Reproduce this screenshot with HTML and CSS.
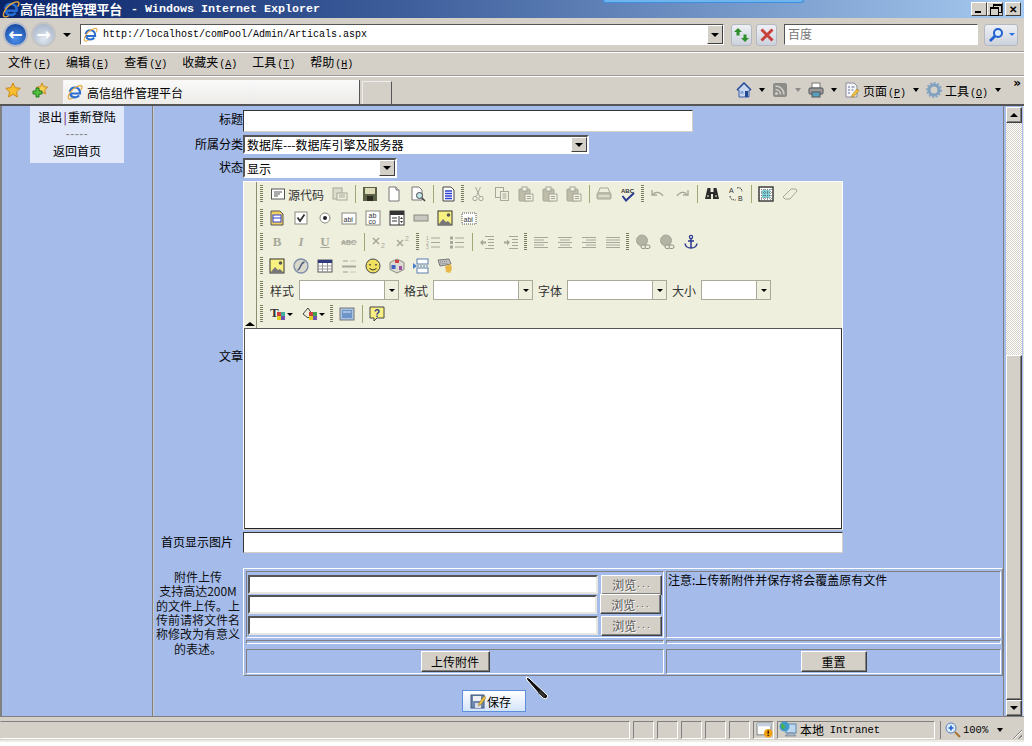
FILE: index.html
```html
<!DOCTYPE html>
<html lang="zh-CN">
<head>
  <meta charset="UTF-8">
  <title>高信组件管理平台 - Windows Internet Explorer</title>
  <link rel="stylesheet" href="styles.css">
</head>
<body>
<svg class="defs" width="0" height="0">
  <defs>
    <symbol id="i-ie" viewBox="0 0 16 16">
      <path d="M3 9.500h10c.4-3.500-1.800-6-5-6-2.600 0-4.700 1.700-5.200 4.300M3.200 9.500c.4 2.300 2.300 3.800 4.700 3.800 1.800 0 3.200-.7 4.200-2" fill="none" stroke="#2a6fd0" stroke-width="2.200"/>
      <path d="M1.500 14.500C.3 12 4 5 10 2.500c2.500-1 4.500-1.200 5 0 .4 1-.4 2.300-1.200 3.400M1.500 14.500c.9 1 3 .3 4.500-.5" fill="none" stroke="#e8a93a" stroke-width="1.200"/>
    </symbol>
    <symbol id="i-star" viewBox="0 0 16 16">
      <path d="M8 1l2.200 4.700 5.100.6-3.800 3.500 1 5.100L8 12.400l-4.500 2.500 1-5.100L.7 6.300l5.100-.6z" fill="#f8bd2e" stroke="#c98a1c"/>
    </symbol>
    <symbol id="i-addfav" viewBox="0 0 16 16">
      <path d="M10 1l1.700 3.700 4 .5-3 2.700.8 4-3.500-2-3.500 2 .8-4-3-2.700 4-.5z" fill="#f8cf55" stroke="#c98a1c"/>
      <path d="M4 6v3H1v3h3v3h3v-3h3V9H7V6z" fill="#55c13c" stroke="#1e7a1c"/>
    </symbol>
    <symbol id="i-refresh" viewBox="0 0 16 16">
      <path d="M4 1L0 5h2.500v3.500h3V5H8zM11 15l4-4h-2.500V7.500h-3V11H7z" fill="#2f8f2a"/>
    </symbol>
    <symbol id="i-stop" viewBox="0 0 16 16">
      <path d="M2.500 2.500l11 11m0-11l-11 11" stroke="#c8403c" stroke-width="3"/>
    </symbol>
    <symbol id="i-search" viewBox="0 0 16 16">
      <circle cx="10" cy="6" r="4" fill="#dfeeff" stroke="#1f5fd0" stroke-width="2"/>
      <path d="M7 9l-5 5" stroke="#1f5fd0" stroke-width="2.600"/>
    </symbol>
    <symbol id="i-home" viewBox="0 0 16 16">
      <path d="M8 1L1 8h2v7h10V8h2z" fill="#c9d6ec" stroke="#3a5da8"/>
      <path d="M1 8l7-7 7 7" fill="none" stroke="#2a4b9e" stroke-width="1.600"/>
      <rect x="9" y="9" width="3" height="6" fill="#1f4a90"/>
      <rect x="4.500" y="9" width="3" height="3" fill="#7fa8dc"/>
    </symbol>
    <symbol id="i-feed" viewBox="0 0 16 16">
      <rect x="1" y="1" width="14" height="14" rx="2" fill="#8c8c88"/>
      <circle cx="4.500" cy="11.500" r="1.500" fill="#d4d0c8"/>
      <path d="M3.500 7.500c2.800 0 5 2.200 5 5M3.500 4c4.800 0 8.500 3.700 8.500 8.500" fill="none" stroke="#d4d0c8" stroke-width="1.600"/>
    </symbol>
    <symbol id="i-print" viewBox="0 0 16 16">
      <rect x="4" y="1" width="8" height="5" fill="#fff" stroke="#777"/>
      <rect x="1" y="6" width="14" height="6" rx="1" fill="#9a9a9a" stroke="#555"/>
      <rect x="4" y="10" width="8" height="5" fill="#5aa0c0" stroke="#555"/>
    </symbol>
    <symbol id="i-page" viewBox="0 0 16 16">
      <path d="M2 1h8l3 3v11H2z" fill="#f6f6f8" stroke="#8a8a98"/>
      <path d="M4 5h2M4 8h2M4 11h2M7.500 5h3M7.500 8h2" stroke="#5f6f9e"/>
      <path d="M8 13l5-6 2 1.500-5 6-2.500.5z" fill="#f0c040" stroke="#a07820" stroke-width=".6"/>
    </symbol>
    <symbol id="i-gear" viewBox="0 0 16 16">
      <circle cx="8" cy="8" r="5" fill="none" stroke="#7fa0bf" stroke-width="3"/>
      <circle cx="8" cy="8" r="7" fill="none" stroke="#8aa6c0" stroke-width="2" stroke-dasharray="2 1.600"/>
    </symbol>
    <symbol id="i-warn" viewBox="0 0 16 16">
      <rect x="1" y="2" width="13" height="11" fill="#fff" stroke="#8a8a8a"/>
      <rect x="1" y="2" width="13" height="3" fill="#c4cfdf"/>
      <circle cx="11.500" cy="11.500" r="4" fill="#f0a010"/>
      <path d="M11.500 9v3m0 1v1" stroke="#402000" stroke-width="1.400"/>
    </symbol>
    <symbol id="i-zone" viewBox="0 0 18 18">
      <rect x="7" y="3" width="10" height="9" fill="#bcd8f0" stroke="#5a86ae"/>
      <path d="M6 15l4-3h4l3 3z" fill="#a8b4c4" stroke="#68788a" stroke-width=".6"/>
      <circle cx="5.500" cy="5.500" r="5" fill="#3f9ac8"/>
      <path d="M2 3c2-1 3 1 4 2s-1 3-2 3-2-2-2-5z" fill="#49b04a"/>
    </symbol>
    <symbol id="i-zoom" viewBox="0 0 16 16">
      <circle cx="6" cy="6" r="5" fill="#dfeeff" stroke="#5580b8"/>
      <path d="M3.500 6h5M6 3.500v5" stroke="#1f5fd0" stroke-width="1.600"/>
      <path d="M10 10l5 5" stroke="#a87838" stroke-width="2.200"/>
    </symbol>
    <symbol id="i-source" viewBox="0 0 16 16">
      <rect x="1.500" y="3" width="13" height="10" fill="#fff" stroke="#555"/>
      <path d="M4 6h8M4 8h6M4 10h4" stroke="#555"/>
    </symbol>
    <symbol id="i-doc2" viewBox="0 0 16 16">
      <rect x="1" y="2" width="9" height="11" fill="#dddccc" stroke="#a8a89a"/>
      <rect x="5" y="7" width="10" height="7" fill="#efefde" stroke="#a8a89a"/>
      <path d="M7 9h6M7 11h6" stroke="#a8a89a"/>
    </symbol>
    <symbol id="i-save" viewBox="0 0 16 16">
      <rect x="1" y="1" width="14" height="14" fill="#5c6246"/>
      <rect x="3" y="2" width="10" height="6" fill="#dedcb8"/>
      <rect x="5" y="10" width="6" height="5" fill="#2c2c20"/>
    </symbol>
    <symbol id="i-new" viewBox="0 0 16 16">
      <path d="M3 1h7l3 3v11H3z" fill="#fff" stroke="#777"/>
      <path d="M10 1v3h3" fill="#ddd" stroke="#777"/>
    </symbol>
    <symbol id="i-preview" viewBox="0 0 16 16">
      <path d="M2 1h7l3 3v10H2z" fill="#fff" stroke="#777"/>
      <circle cx="9.500" cy="9.500" r="3" fill="#bfe6ea" stroke="#444"/>
      <path d="M12 12l3 3" stroke="#444" stroke-width="1.600"/>
    </symbol>
    <symbol id="i-template" viewBox="0 0 16 16">
      <path d="M3 1h8l3 3v11H3z" fill="#fff" stroke="#444"/>
      <path d="M5 5h7M5 7.500h7M5 10h7M5 12.500h7" stroke="#2d3fd0" stroke-width="1.400"/>
    </symbol>
    <symbol id="i-cut" viewBox="0 0 16 16">
      <path d="M5.500 1l4 9M10.500 1l-4 9" stroke="#a8a89a" fill="none"/>
      <circle cx="5" cy="12.500" r="2.200" fill="none" stroke="#a8a89a"/>
      <circle cx="11" cy="12.500" r="2.200" fill="none" stroke="#a8a89a"/>
    </symbol>
    <symbol id="i-copy" viewBox="0 0 16 16">
      <rect x="1.500" y="1.500" width="8" height="10" fill="none" stroke="#a8a89a"/>
      <rect x="6.500" y="5.500" width="8" height="9" fill="#efefde" stroke="#a8a89a"/>
      <path d="M8.500 8h4M8.500 10h4M8.500 12h4" stroke="#a8a89a"/>
    </symbol>
    <symbol id="i-paste" viewBox="0 0 16 16">
      <rect x="1" y="3" width="11" height="12" rx="1" fill="#bdbdaa" stroke="#a8a89a"/>
      <rect x="4" y="1" width="5" height="4" fill="#efefde" stroke="#a8a89a"/>
      <rect x="7" y="8" width="8" height="7" fill="#efefde" stroke="#a8a89a"/>
      <path d="M9 10.500h4M9 12.500h4" stroke="#a8a89a"/>
    </symbol>
    <symbol id="i-printg" viewBox="0 0 16 16">
      <path d="M4 2h8l2 5H2z" fill="#efefde" stroke="#a8a89a"/>
      <rect x="1" y="7" width="14" height="6" rx="1" fill="#c4c4b0" stroke="#a8a89a"/>
      <path d="M3 10h10" stroke="#efefde"/>
    </symbol>
    <symbol id="i-spell" viewBox="0 0 16 16">
      <text x="1" y="6.500" class="ti ti-abc">ABC</text>
      <path d="M2.500 10l3.500 4.500L14 7" fill="none" stroke="#2a3a90" stroke-width="2"/>
    </symbol>
    <symbol id="i-undo" viewBox="0 0 16 16">
      <path d="M2 4v5h5M3 8.500c2-3 7-3 10 1.500" fill="none" stroke="#a8a89a" stroke-width="1.300"/>
    </symbol>
    <symbol id="i-redo" viewBox="0 0 16 16">
      <path d="M14 4v5H9M13 8.500c-2-3-7-3-10 1.500" fill="none" stroke="#a8a89a" stroke-width="1.300"/>
    </symbol>
    <symbol id="i-find" viewBox="0 0 16 16">
      <path d="M3.500 2h3v4h3V2h3l2.500 11h-6V8H7v5H1z" fill="#2c2c2c"/>
      <path d="M3 10h2M11 10h2" stroke="#efefde"/>
    </symbol>
    <symbol id="i-replace" viewBox="0 0 16 16">
      <text x="1" y="7" class="ti ti-sm">A</text>
      <text x="10" y="15" class="ti ti-sm">B</text>
      <path d="M9 2c4-1 5 1 5 4M2 10c0 3 2 4 6 4" fill="none" stroke="#333" stroke-dasharray="1.500 1"/>
    </symbol>
    <symbol id="i-selall" viewBox="0 0 16 16">
      <rect x="1" y="1" width="14" height="14" fill="#fff" stroke="#333" stroke-width="1.400"/>
      <rect x="4" y="4" width="8" height="8" fill="#7fd0d8"/>
      <path d="M1 3.500h14M1 6.500h14M1 9.500h14M1 12.500h14M3.500 1v14M6.500 1v14M9.500 1v14M12.500 1v14" stroke="#555" stroke-width=".6" stroke-dasharray="1 1"/>
    </symbol>
    <symbol id="i-eraser" viewBox="0 0 16 16">
      <path d="M1 11L9 3h5l1 2-7 8H3z" fill="#efefde" stroke="#a8a89a"/>
    </symbol>
    <symbol id="i-form" viewBox="0 0 16 16">
      <path d="M2 1h9l3 3v11H2z" fill="#f0d060" stroke="#555"/>
      <rect x="4" y="5" width="8" height="7" fill="#fff" stroke="#2d3fd0"/>
      <path d="M4 8h8" stroke="#2d3fd0"/>
    </symbol>
    <symbol id="i-check" viewBox="0 0 16 16">
      <rect x="2" y="2" width="12" height="12" fill="#fff" stroke="#8a8a80"/>
      <path d="M4.500 7.500L7 11l4.500-6.500" fill="none" stroke="#333" stroke-width="1.800"/>
    </symbol>
    <symbol id="i-radio" viewBox="0 0 16 16">
      <circle cx="8" cy="8" r="5" fill="#fff" stroke="#8a8a80"/>
      <circle cx="8" cy="8" r="2" fill="#222"/>
    </symbol>
    <symbol id="i-textf" viewBox="0 0 16 16">
      <rect x="1" y="3" width="14" height="11" fill="#fff" stroke="#8a8a80"/>
      <text x="2.500" y="12" class="ti ti-ab">abl</text>
    </symbol>
    <symbol id="i-texta" viewBox="0 0 16 16">
      <rect x="1" y="1" width="14" height="14" fill="#fff" stroke="#8a8a80"/>
      <text x="3.500" y="7.500" class="ti ti-ab">ab</text>
      <text x="3.500" y="14" class="ti ti-ab">co</text>
    </symbol>
    <symbol id="i-select" viewBox="0 0 16 16">
      <rect x="1" y="1" width="14" height="14" fill="#fff" stroke="#333"/>
      <rect x="1" y="1" width="14" height="4" fill="#333"/>
      <path d="M3 8h5M3 11h5M10 6v9" stroke="#333"/>
      <path d="M11 9h3l-1.500-2zM11 11h3l-1.500 2z" fill="#333"/>
    </symbol>
    <symbol id="i-button" viewBox="0 0 16 16">
      <rect x="1" y="5" width="14" height="6" fill="#c8c8c0" stroke="#8a8a80"/>
    </symbol>
    <symbol id="i-image" viewBox="0 0 16 16">
      <rect x="1" y="1" width="14" height="14" fill="#f8f080" stroke="#333"/>
      <circle cx="11.500" cy="5" r="1.800" fill="#555"/>
      <path d="M1 15l5-6 3 3 2-1 4 4z" fill="#777"/>
    </symbol>
    <symbol id="i-hidden" viewBox="0 0 16 16">
      <rect x="1" y="3" width="14" height="11" fill="#fff" stroke="#555" stroke-dasharray="1 1"/>
      <text x="2.500" y="12" class="ti ti-ab">abl</text>
    </symbol>
    <symbol id="i-abc" viewBox="0 0 16 16">
      <text x="0" y="11" class="ti ti-abcg">ABC</text>
      <path d="M0 8h16" stroke="#a8a89a"/>
    </symbol>
    <symbol id="i-sub" viewBox="0 0 16 16">
      <path d="M2 4l6 6m0-6l-6 6" stroke="#a8a89a" stroke-width="1.500"/>
      <text x="10" y="14" class="ti ti-grey">2</text>
    </symbol>
    <symbol id="i-sup" viewBox="0 0 16 16">
      <path d="M2 6l6 6m0-6l-6 6" stroke="#a8a89a" stroke-width="1.500"/>
      <text x="10" y="7" class="ti ti-grey">2</text>
    </symbol>
    <symbol id="i-ol" viewBox="0 0 16 16">
      <text x="1" y="6" class="ti ti-grey ti-xs">1</text>
      <text x="1" y="10.500" class="ti ti-grey ti-xs">2</text>
      <text x="1" y="15" class="ti ti-grey ti-xs">3</text>
      <path d="M6 4h9M6 8.500h9M6 13h9" stroke="#a8a89a"/>
    </symbol>
    <symbol id="i-ul" viewBox="0 0 16 16">
      <path d="M1 2.500h3v3H1zM1 7h3v3H1zM1 11.500h3v3H1z" fill="#a8a89a"/>
      <path d="M6 4h9M6 8.500h9M6 13h9" stroke="#a8a89a"/>
    </symbol>
    <symbol id="i-outdent" viewBox="0 0 16 16">
      <path d="M6 2.500h9M9 5.500h6M9 8.500h6M9 11.500h6M6 14.500h9" stroke="#a8a89a"/>
      <path d="M1 8.500l3-3v2h3v2H4v2z" fill="#a8a89a"/>
    </symbol>
    <symbol id="i-indent" viewBox="0 0 16 16">
      <path d="M6 2.500h9M9 5.500h6M9 8.500h6M9 11.500h6M6 14.500h9" stroke="#a8a89a"/>
      <path d="M7 8.500l-3-3v2H1v2h3v2z" fill="#a8a89a"/>
    </symbol>
    <symbol id="i-left" viewBox="0 0 16 16">
      <path d="M1 3.500h14M1 6h10M1 8.500h14M1 11h10M1 13.500h14" stroke="#a8a89a"/>
    </symbol>
    <symbol id="i-center" viewBox="0 0 16 16">
      <path d="M1 3.500h14M3 6h10M1 8.500h14M3 11h10M1 13.500h14" stroke="#a8a89a"/>
    </symbol>
    <symbol id="i-right" viewBox="0 0 16 16">
      <path d="M1 3.500h14M5 6h10M1 8.500h14M5 11h10M1 13.500h14" stroke="#a8a89a"/>
    </symbol>
    <symbol id="i-full" viewBox="0 0 16 16">
      <path d="M1 3.500h14M1 6h14M1 8.500h14M1 11h14M1 13.500h14" stroke="#a8a89a"/>
    </symbol>
    <symbol id="i-link" viewBox="0 0 16 16">
      <circle cx="7" cy="6.500" r="5.500" fill="#b4b4a4" stroke="#a8a89a"/>
      <rect x="6" y="11" width="5" height="3.500" rx="1.700" fill="#efefde" stroke="#8c8c80"/>
      <rect x="10" y="11" width="5" height="3.500" rx="1.700" fill="#efefde" stroke="#8c8c80"/>
    </symbol>
    <symbol id="i-anchor" viewBox="0 0 16 16">
      <circle cx="8" cy="3" r="1.600" fill="none" stroke="#2a3a90" stroke-width="1.200"/>
      <path d="M8 4.500V14M5 7h6M2 9.500c.5 3 3 4.500 6 4.500s5.500-1.500 6-4.500" fill="none" stroke="#2a3a90" stroke-width="1.500"/>
    </symbol>
    <symbol id="i-flash" viewBox="0 0 16 16">
      <circle cx="8" cy="8" r="7" fill="#d8d8cc" stroke="#7f8fa8" stroke-width="1.400"/>
      <path d="M4.500 12c3 0 2.500-7 7-8" fill="none" stroke="#4a5a78" stroke-width="1.400"/>
    </symbol>
    <symbol id="i-table" viewBox="0 0 16 16">
      <rect x="1" y="2" width="14" height="12" fill="#fff" stroke="#555"/>
      <rect x="1" y="2" width="14" height="3" fill="#2d3a80"/>
      <path d="M1 8h14M1 11h14M5.500 5v9M10.500 5v9" stroke="#999"/>
    </symbol>
    <symbol id="i-hr" viewBox="0 0 16 16">
      <path d="M2 3h5M2 14h5" stroke="#c8c8b8" stroke-width="2"/>
      <path d="M1 8.500h14" stroke="#a8a89a" stroke-width="2"/>
      <path d="M9 3h6M9 14h6" stroke="#c8c8b8"/>
    </symbol>
    <symbol id="i-smile" viewBox="0 0 16 16">
      <circle cx="8" cy="8" r="7" fill="#f0e060" stroke="#444"/>
      <path d="M5 6v1.500M11 6v1.500" stroke="#333" stroke-width="1.400"/>
      <path d="M4.500 10c1.500 2.500 5.500 2.500 7 0" fill="none" stroke="#333"/>
    </symbol>
    <symbol id="i-char" viewBox="0 0 16 16">
      <path d="M8 1l7 3.500v7L8 15l-7-3.500v-7z" fill="#dcdcd4" stroke="#8a8a80"/>
      <rect x="6" y="2" width="4" height="3" fill="#d04040"/>
      <rect x="2.500" y="7" width="4" height="4" fill="#4060c0"/>
      <rect x="10" y="8" width="3" height="4" fill="#a050a0"/>
    </symbol>
    <symbol id="i-pagebreak" viewBox="0 0 16 16">
      <rect x="4" y="1" width="11" height="5" fill="#fff" stroke="#5a7fae"/>
      <rect x="4" y="10" width="11" height="5" fill="#fff" stroke="#5a7fae"/>
      <path d="M0 5l4 3-4 3z" fill="#4a80c8"/>
      <path d="M4 8h11" stroke="#5a7fae" stroke-dasharray="2 1"/>
    </symbol>
    <symbol id="i-keyboard" viewBox="0 0 16 16">
      <path d="M1 2l11-1 2 5-11 2z" fill="#c4c4c8" stroke="#777"/>
      <path d="M8 8l6-2 1 5-2 4-4-1z" fill="#e8b848"/>
      <path d="M3 4l8-1M3.500 6l8-1" stroke="#777" stroke-dasharray="1 1"/>
    </symbol>
    <symbol id="i-tcolor" viewBox="0 0 16 16">
      <text x="0" y="11" class="ti ti-t">T</text>
      <rect x="7" y="6" width="4" height="4" fill="#d04040"/>
      <rect x="11" y="6" width="4" height="4" fill="#40b0a0"/>
      <rect x="7" y="10" width="4" height="4" fill="#e0d020"/>
      <rect x="11" y="10" width="4" height="4" fill="#7050b0"/>
    </symbol>
    <symbol id="i-bcolor" viewBox="0 0 16 16">
      <path d="M1 8l5-6 4 6-4 4z" fill="#efefde" stroke="#444"/>
      <rect x="7" y="6" width="4" height="4" fill="#d04040"/>
      <rect x="11" y="6" width="4" height="4" fill="#40a050"/>
      <rect x="7" y="10" width="4" height="4" fill="#e0d020"/>
      <rect x="11" y="10" width="4" height="4" fill="#7050b0"/>
    </symbol>
    <symbol id="i-blocks" viewBox="0 0 16 16">
      <rect x="1" y="2" width="14" height="12" fill="#a8c4e4" stroke="#777"/>
      <rect x="3" y="4" width="10" height="8" fill="#6f94c8"/>
      <path d="M4 6h8" stroke="#dce8f6"/>
    </symbol>
    <symbol id="i-about" viewBox="0 0 16 16">
      <path d="M1 1h14v11H8l-3 3v-3H1z" fill="#f8f080" stroke="#444"/>
      <text x="5" y="10.500" class="ti ti-q">?</text>
    </symbol>
    <symbol id="i-savebtn" viewBox="0 0 16 16">
      <rect x="1" y="2" width="13" height="13" fill="#6f88b0" stroke="#3e5478"/>
      <rect x="3" y="3" width="8" height="5" fill="#f0f0f4"/>
      <rect x="5" y="10" width="6" height="5" fill="#d8dce4"/>
      <path d="M9 10l5-7 2 1.500-5 7-2.500 1z" fill="#f0c848" stroke="#806010" stroke-width=".5"/>
    </symbol>
  </defs>
</svg>

<div class="window">
  <div class="titlebar">
    <div class="title-tab"></div>
    <svg class="ico-title"><use href="#i-ie"/></svg>
    <span class="title-cn">高信组件管理平台</span>
    <span class="title-en">- Windows Internet Explorer</span>
    <div class="win-btns">
      <span class="win-btn win-min"></span>
      <span class="win-btn win-max"></span>
      <span class="win-btn win-close">✕</span>
    </div>
  </div>

  <div class="addressbar">
    <span class="nav-btn nav-back">←</span>
    <span class="nav-btn nav-fwd">→</span>
    <span class="arrow nav-arrow"></span>
    <div class="url-box">
      <svg class="ico"><use href="#i-ie"/></svg>
      <span class="url-text">http://localhost/comPool/Admin/Articals.aspx</span>
      <span class="drop-btn"><span class="arrow"></span></span>
    </div>
    <span class="tool-btn"><svg class="ico"><use href="#i-refresh"/></svg></span>
    <span class="tool-btn"><svg class="ico"><use href="#i-stop"/></svg></span>
    <div class="search-box">百度</div>
    <span class="tool-btn search-btn">
      <svg class="ico"><use href="#i-search"/></svg>
      <span class="arrow arrow-blue"></span>
    </span>
  </div>

  <div class="menubar">
    <span>文件<small>(<u>F</u>)</small></span>
    <span>编辑<small>(<u>E</u>)</small></span>
    <span>查看<small>(<u>V</u>)</small></span>
    <span>收藏夹<small>(<u>A</u>)</small></span>
    <span>工具<small>(<u>T</u>)</small></span>
    <span>帮助<small>(<u>H</u>)</small></span>
  </div>

  <div class="tabbar">
    <svg class="ico fav-star"><use href="#i-star"/></svg>
    <svg class="ico fav-add"><use href="#i-addfav"/></svg>
    <div class="tab">
      <svg class="ico"><use href="#i-ie"/></svg>
      <span>高信组件管理平台</span>
    </div>
    <div class="tab-new"></div>
    <div class="cmdbar">
      <svg class="ico"><use href="#i-home"/></svg><span class="arrow"></span>
      <svg class="ico"><use href="#i-feed"/></svg><span class="arrow arrow-grey"></span>
      <svg class="ico"><use href="#i-print"/></svg><span class="arrow"></span>
      <svg class="ico"><use href="#i-page"/></svg><span class="cmd-text">页面<small>(<u>P</u>)</small></span><span class="arrow"></span>
      <svg class="ico"><use href="#i-gear"/></svg><span class="cmd-text">工具<small>(<u>O</u>)</small></span><span class="arrow"></span>
      <span class="cmd-more">»</span>
    </div>
  </div>

  <div class="content">
    <div class="sidebar">
      <div class="side-box">
        <div>退出<span class="side-sep">|</span>重新登陆</div>
        <div class="side-dash">-----</div>
        <div>返回首页</div>
      </div>
    </div>

    <form class="main">
      <div class="row row-title">
        <label>标题</label>
        <input class="field field-title" type="text">
      </div>
      <div class="row row-cat">
        <label>所属分类</label>
        <div class="select select-cat">数据库---数据库引擎及服务器<span class="drop-btn"><span class="arrow"></span></span></div>
      </div>
      <div class="row row-state">
        <label>状态</label>
        <div class="select select-state">显示<span class="drop-btn"><span class="arrow"></span></span></div>
      </div>

      <div class="row row-editor">
        <label>文章</label>
        <div class="editor">
          <div class="editor-tools">
            <div class="collapse"><span class="arrow arrow-up"></span></div>
            <div class="toolrows">
              <div class="toolrow">
                <i class="grip"></i>
                <span class="btn btn-text"><svg class="ico"><use href="#i-source"/></svg>源代码</span>
                <span class="btn"><svg class="ico"><use href="#i-doc2"/></svg></span>
                <i class="sep"></i>
                <span class="btn"><svg class="ico"><use href="#i-save"/></svg></span>
                <span class="btn"><svg class="ico"><use href="#i-new"/></svg></span>
                <span class="btn"><svg class="ico"><use href="#i-preview"/></svg></span>
                <i class="sep"></i>
                <span class="btn"><svg class="ico"><use href="#i-template"/></svg></span>
                <i class="grip"></i>
                <span class="btn"><svg class="ico"><use href="#i-cut"/></svg></span>
                <span class="btn"><svg class="ico"><use href="#i-copy"/></svg></span>
                <span class="btn"><svg class="ico"><use href="#i-paste"/></svg></span>
                <span class="btn"><svg class="ico"><use href="#i-paste"/></svg></span>
                <span class="btn"><svg class="ico"><use href="#i-paste"/></svg></span>
                <i class="sep"></i>
                <span class="btn"><svg class="ico"><use href="#i-printg"/></svg></span>
                <span class="btn"><svg class="ico"><use href="#i-spell"/></svg></span>
                <i class="grip"></i>
                <span class="btn"><svg class="ico"><use href="#i-undo"/></svg></span>
                <span class="btn"><svg class="ico"><use href="#i-redo"/></svg></span>
                <i class="sep"></i>
                <span class="btn"><svg class="ico"><use href="#i-find"/></svg></span>
                <span class="btn"><svg class="ico"><use href="#i-replace"/></svg></span>
                <i class="sep"></i>
                <span class="btn"><svg class="ico"><use href="#i-selall"/></svg></span>
                <span class="btn"><svg class="ico"><use href="#i-eraser"/></svg></span>
              </div>
              <div class="toolrow">
                <i class="grip"></i>
                <span class="btn"><svg class="ico"><use href="#i-form"/></svg></span>
                <span class="btn"><svg class="ico"><use href="#i-check"/></svg></span>
                <span class="btn"><svg class="ico"><use href="#i-radio"/></svg></span>
                <span class="btn"><svg class="ico"><use href="#i-textf"/></svg></span>
                <span class="btn"><svg class="ico"><use href="#i-texta"/></svg></span>
                <span class="btn"><svg class="ico"><use href="#i-select"/></svg></span>
                <span class="btn"><svg class="ico"><use href="#i-button"/></svg></span>
                <span class="btn"><svg class="ico"><use href="#i-image"/></svg></span>
                <span class="btn"><svg class="ico"><use href="#i-hidden"/></svg></span>
              </div>
              <div class="toolrow">
                <i class="grip"></i>
                <span class="btn btn-fmt btn-b">B</span>
                <span class="btn btn-fmt btn-i">I</span>
                <span class="btn btn-fmt btn-u">U</span>
                <span class="btn"><svg class="ico"><use href="#i-abc"/></svg></span>
                <i class="sep"></i>
                <span class="btn"><svg class="ico"><use href="#i-sub"/></svg></span>
                <span class="btn"><svg class="ico"><use href="#i-sup"/></svg></span>
                <i class="grip"></i>
                <span class="btn"><svg class="ico"><use href="#i-ol"/></svg></span>
                <span class="btn"><svg class="ico"><use href="#i-ul"/></svg></span>
                <i class="sep"></i>
                <span class="btn"><svg class="ico"><use href="#i-outdent"/></svg></span>
                <span class="btn"><svg class="ico"><use href="#i-indent"/></svg></span>
                <i class="grip"></i>
                <span class="btn"><svg class="ico"><use href="#i-left"/></svg></span>
                <span class="btn"><svg class="ico"><use href="#i-center"/></svg></span>
                <span class="btn"><svg class="ico"><use href="#i-right"/></svg></span>
                <span class="btn"><svg class="ico"><use href="#i-full"/></svg></span>
                <i class="grip"></i>
                <span class="btn"><svg class="ico"><use href="#i-link"/></svg></span>
                <span class="btn"><svg class="ico"><use href="#i-link"/></svg></span>
                <span class="btn"><svg class="ico"><use href="#i-anchor"/></svg></span>
              </div>
              <div class="toolrow">
                <i class="grip"></i>
                <span class="btn"><svg class="ico"><use href="#i-image"/></svg></span>
                <span class="btn"><svg class="ico"><use href="#i-flash"/></svg></span>
                <span class="btn"><svg class="ico"><use href="#i-table"/></svg></span>
                <span class="btn"><svg class="ico"><use href="#i-hr"/></svg></span>
                <span class="btn"><svg class="ico"><use href="#i-smile"/></svg></span>
                <span class="btn"><svg class="ico"><use href="#i-char"/></svg></span>
                <span class="btn"><svg class="ico"><use href="#i-pagebreak"/></svg></span>
                <span class="btn"><svg class="ico"><use href="#i-keyboard"/></svg></span>
              </div>
              <div class="toolrow">
                <i class="grip"></i>
                <span class="combo-label">样式</span>
                <span class="combo combo-wide"><span class="combo-btn"><span class="arrow"></span></span></span>
                <span class="combo-label">格式</span>
                <span class="combo combo-wide"><span class="combo-btn"><span class="arrow"></span></span></span>
                <span class="combo-label">字体</span>
                <span class="combo combo-wide"><span class="combo-btn"><span class="arrow"></span></span></span>
                <span class="combo-label">大小</span>
                <span class="combo combo-small"><span class="combo-btn"><span class="arrow"></span></span></span>
              </div>
              <div class="toolrow">
                <i class="grip"></i>
                <span class="btn btn-color"><svg class="ico"><use href="#i-tcolor"/></svg><span class="arrow"></span></span>
                <span class="btn btn-color"><svg class="ico"><use href="#i-bcolor"/></svg><span class="arrow"></span></span>
                <i class="grip"></i>
                <span class="btn"><svg class="ico"><use href="#i-blocks"/></svg></span>
                <i class="sep"></i>
                <span class="btn"><svg class="ico"><use href="#i-about"/></svg></span>
              </div>
            </div>
          </div>
          <div class="editor-body"></div>
        </div>
      </div>

      <div class="row row-pic">
        <label>首页显示图片</label>
        <input class="field field-pic" type="text">
      </div>

      <div class="row row-upload">
        <label class="upload-label">附件上传<br>支持高达200M的文件上传。上传前请将文件名称修改为有意义的表述。</label>
        <div class="upload">
          <div class="upload-grid">
            <div class="cell file-cell">
              <div class="file-row"><input class="field field-file" type="text"><span class="raised browse">浏览<small>...</small></span></div>
              <div class="file-row file-row-2"><input class="field field-file" type="text"><span class="raised browse">浏览<small>...</small></span></div>
              <div class="file-row"><input class="field field-file" type="text"><span class="raised browse">浏览<small>...</small></span></div>
            </div>
            <div class="cell note-cell">注意:上传新附件并保存将会覆盖原有文件</div>
            <div class="cell spacer-cell"></div>
            <div class="cell spacer-cell"></div>
            <div class="cell btn-cell"><span class="raised big-btn btn-upload">上传附件</span></div>
            <div class="cell btn-cell"><span class="raised big-btn btn-reset">重置</span></div>
          </div>
        </div>
      </div>

      <div class="save-row">
        <span class="save-btn"><svg class="ico"><use href="#i-savebtn"/></svg>保存</span>
      </div>

      <svg class="pen" viewBox="0 0 24 25">
        <path d="M1 1l3 1 16 15 3 3-2 3-3-1-3-3L2 4z" fill="#111" stroke="#fff"/>
        <path d="M15 14l6 5-2 3-6-5z" fill="#333"/>
      </svg>
    </form>

    <div class="scrollbar">
      <span class="raised sb-btn"><span class="arrow arrow-up"></span></span>
      <div class="sb-track"></div>
      <div class="raised sb-thumb"></div>
      <span class="raised sb-btn"><span class="arrow"></span></span>
    </div>
  </div>

  <div class="statusbar">
    <span class="st-cell st-grow"></span>
    <span class="st-cell st-small"></span>
    <span class="st-cell st-small"></span>
    <span class="st-cell st-small"></span>
    <span class="st-cell st-small"></span>
    <span class="st-cell st-small"></span>
    <span class="st-cell st-small"><svg class="ico"><use href="#i-warn"/></svg></span>
    <span class="st-cell st-zone"><svg class="ico ico-zone"><use href="#i-zone"/></svg>本地 <span class="st-latin">Intranet</span></span>
    <span class="st-cell st-zoom"><svg class="ico"><use href="#i-zoom"/></svg><span class="st-latin">100%</span><span class="arrow"></span></span>
    <span class="st-grip"></span>
  </div>
</div>
</body>
</html>
```

FILE: styles.css
```css
* { box-sizing: border-box; }
html, body { margin: 0; padding: 0; background: #fff; }
body { font-family: "Noto Sans CJK SC", "Liberation Sans", sans-serif; font-size: 12px; color: #000; width: 1032px; height: 746px; overflow: hidden; }
small { font-family: "Liberation Mono", monospace; font-size: 10px; margin-left: 1px; }
input { display: block; margin: 0; outline: none; }
.defs { position: absolute; }

.window { width: 1024px; height: 742px; background: #d4d0c8; display: flex; flex-direction: column; position: relative; }
.ico { width: 16px; height: 16px; display: block; flex: none; }

.arrow { display: inline-block; width: 0; height: 0; border-left: 4px solid transparent; border-right: 4px solid transparent; border-top: 4px solid #000; flex: none; }
.arrow-up { border-top: 0; border-bottom: 4px solid #000; }
.arrow-grey { border-top-color: #8c8c88; }
.arrow-blue { border-top-color: #2a6fe0; border-left-width: 3px; border-right-width: 3px; border-top-width: 3px; }

.raised { background: #d4d0c8; border: 1px solid; border-color: #fff #404040 #404040 #fff; box-shadow: inset -1px -1px 0 #808080; display: flex; align-items: center; justify-content: center; }

/* title bar */
.titlebar { height: 18px; flex: none; display: flex; align-items: center; color: #fff; font-weight: bold; background: linear-gradient(90deg, #0a246a 0%, #3e5f9c 40%, #a6caf0 100%); position: relative; white-space: pre; }
.title-tab { position: absolute; left: 603px; top: 0; width: 201px; height: 3px; background: #6fb4ec; border: 1px solid #3d8fe0; border-top: 0; border-radius: 0 0 3px 3px; }
.ico-title { width: 18px; height: 18px; margin-left: 2px; flex: none; }
.title-cn { font-size: 13px; line-height: 18px; letter-spacing: -.25px; }
.title-en { font-family: "Liberation Mono", monospace; font-size: 11.67px; margin-left: 9px; }
.win-btns { margin-left: auto; margin-right: 3px; display: flex; gap: 0; }
.win-btn { width: 16px; height: 14px; background: #d4d0c8; border: 1px solid; border-color: #fff #404040 #404040 #fff; position: relative; color: #000; font-size: 10px; line-height: 12px; text-align: center; }
.win-close { margin-left: 2px; }
.win-min::after { content: ""; position: absolute; left: 3px; bottom: 2px; width: 6px; height: 2px; background: #000; }
.win-max::before { content: ""; position: absolute; left: 5px; top: 1px; width: 7px; height: 6px; border: 1px solid #000; border-top-width: 2px; }
.win-max::after { content: ""; position: absolute; left: 2px; top: 4px; width: 7px; height: 6px; border: 1px solid #000; border-top-width: 2px; background: #d4d0c8; }

/* address bar */
.addressbar { height: 34px; flex: none; display: flex; align-items: center; border-bottom: 1px solid #a09c94; box-shadow: 0 1px 0 #fff; padding-left: 3px; }
.nav-btn { width: 25px; height: 25px; border-radius: 50%; display: flex; align-items: center; justify-content: center; color: #fff; font-weight: bold; font-size: 17px; line-height: 1; font-family: "DejaVu Sans", sans-serif; flex: none; }
.nav-back { background: radial-gradient(circle at 50% 70%, #4f93ee, #1b4fa8 75%); border: 2px solid #b4bac8; }
.nav-fwd { margin-left: 3px; background: radial-gradient(circle at 50% 70%, #dfe6ef, #aab8cc 80%); border: 2px solid #c4c4c4; }
.nav-arrow { margin-left: 7px; margin-right: 9px; }
.url-box { width: 644px; height: 21px; background: #fff; border: 1px solid; border-color: #555 #fff #fff #555; display: flex; align-items: center; padding-left: 2px; }
.url-box .ico { width: 15px; height: 15px; }
.url-text { font-family: "Liberation Mono", monospace; font-size: 10px; margin-left: 5px; }
.drop-btn { margin-left: auto; width: 16px; height: 100%; background: #d4d0c8; border: 1px solid; border-color: #fff #404040 #404040 #fff; display: flex; align-items: center; justify-content: center; flex: none; }
.tool-btn { width: 21px; height: 22px; margin-left: 7px; border: 1px solid #b4b8c0; border-radius: 3px; background: linear-gradient(#eef0f4, #ccd2dc); display: flex; align-items: center; justify-content: center; flex: none; }
.tool-btn + .tool-btn { margin-left: 4px; }
.search-box { width: 194px; height: 21px; margin-left: 7px; background: #fff; border: 1px solid; border-color: #555 #fff #fff #555; color: #777; line-height: 18px; padding-left: 3px; }
.search-btn { width: 34px; margin-left: 6px; gap: 5px; }

/* menu */
.menubar { height: 24px; flex: none; display: flex; align-items: center; padding-left: 8px; gap: 15px; border-bottom: 1px solid #a09c94; box-shadow: 0 1px 0 #fff; }
.menubar span { line-height: 20px; white-space: nowrap; }

/* tabs and commands */
.tabbar { height: 30px; flex: none; display: flex; align-items: flex-end; border-bottom: 2px solid #555; }
.fav-star { margin: 0 0 6px 5px; }
.fav-add { margin: 0 0 6px 11px; }
.tab { width: 297px; height: 24px; margin-left: 15px; background: linear-gradient(#fafafa, #ecebe8); border-right: 1px solid #555; border-left: 1px solid #f4f4f4; display: flex; align-items: center; padding-left: 3px; gap: 4px; }
.tab-new { width: 30px; height: 23px; margin-left: 2px; border: 1px solid #eee; border-right: 1px solid #555; border-bottom: 0; }
.cmdbar { margin-left: auto; height: 28px; display: flex; align-items: center; padding-right: 16px; position: relative; }
.cmdbar .arrow { margin: 0 7px; border-left-width: 3px; border-right-width: 3px; }
.cmd-text { margin-left: 3px; white-space: nowrap; }
.cmd-more { position: absolute; right: 3px; top: 0; font-weight: bold; font-size: 12px; line-height: 14px; font-family: "DejaVu Sans", sans-serif; }

/* page */
.content { height: 610px; flex: none; display: flex; background: #a5bceb; border-left: 2px solid #808080; border-right: 1px solid #e8e6e0; position: relative; }
.sidebar { width: 151px; flex: none; border-right: 1px solid #808080; box-shadow: 1px 0 0 #c8c8c8; padding-left: 28px; }
.side-box { width: 94px; height: 57px; background: #e0e8fa; text-align: center; line-height: 17px; padding-top: 2px; }
.side-sep { color: #600060; margin: 0 1px; }
.side-dash { color: #888; height: 17px; line-height: 18px; letter-spacing: .5px; font-family: "Liberation Sans", sans-serif; }

.main { width: 851px; flex: none; padding-top: 4px; position: relative; border-right: 1px solid #808080; }
.row { display: flex; }
.row label { width: 90px; padding-right: 0; text-align: right; flex: none; line-height: 17px; }
.row-title { height: 22px; }
.row-cat { height: 19px; margin-top: 3px; }
.row-state { height: 20px; margin-top: 4px; }
.row-editor { height: 349px; margin-top: 3px; align-items: center; }
.row-pic { height: 21px; margin-top: 2px; }
.row-upload { height: 108px; margin-top: 15px; }
.row-pic label { padding-right: 10px; line-height: 19px; }

.field { background: #fff; border: 1px solid; border-color: #333 #d4d0c8 #d4d0c8 #333; border-radius: 0; padding: 0; }
.field-title { width: 450px; height: 22px; }
.field-pic { width: 600px; height: 21px; }

.select { background: #fff; border: 2px solid; border-color: #555 #fff #fff #555; display: flex; align-items: center; padding-left: 2px; line-height: 15px; white-space: nowrap; }
.select .drop-btn { width: 16px; }
.select-cat { width: 346px; }
.select-state { width: 154px; }

/* editor */
.editor { width: 600px; height: 349px; border: 1px solid; border-color: #fff #fff #d4d0c8 #fff; display: flex; flex-direction: column; }
.editor-tools { height: 146px; background: #efefde; display: flex; flex: none; }
.collapse { width: 13px; flex: none; border-right: 1px solid #8c8c70; display: flex; align-items: flex-end; justify-content: center; padding-bottom: 2px; }
.collapse .arrow { border-left-width: 5px; border-right-width: 5px; }
.toolrows { flex: 1; padding-left: 2px; }
.toolrow { height: 24px; display: flex; align-items: center; }
.grip { width: 6px; height: 18px; flex: none; background: repeating-linear-gradient(#7c7c60 0 1px, #efefde 1px 2px) no-repeat 1px 0 / 3px 18px; }
.sep { width: 6px; height: 18px; flex: none; background: #a5a578; background-clip: content-box; padding: 0 2px 0 3px; }
.btn { width: 24px; height: 24px; flex: none; display: flex; align-items: center; justify-content: center; }
.btn-text { width: 63px; justify-content: flex-start; padding-left: 5px; gap: 2px; color: #333; white-space: nowrap; }
.btn-fmt { font-family: "Liberation Serif", serif; font-size: 13px; color: #a8a89a; }
.btn-b { font-weight: bold; }
.btn-i { font-style: italic; font-weight: bold; }
.btn-u { text-decoration: underline; font-weight: bold; }
.btn-color { width: 32px; gap: 1px; }
.btn-color .arrow { border-left-width: 3px; border-right-width: 3px; border-top-width: 3px; }
.combo-label { margin: 0 5px; color: #333; white-space: nowrap; }
.combo { height: 20px; background: #fff; border: 1px solid #aaa99a; display: flex; justify-content: flex-end; flex: none; }
.combo-wide { width: 100px; }
.combo-small { width: 70px; }
.combo-btn { width: 14px; background: #efefde; border-left: 1px solid #aaa99a; display: flex; align-items: center; justify-content: center; }
.combo-btn .arrow { border-left-width: 3px; border-right-width: 3px; border-top-width: 3px; }
.editor-body { flex: 1; background: #fff; border: 1px solid; border-color: #555 #333 #222 #555; }

/* upload */
.upload-label.upload-label { width: 84px; margin-left: 3px; margin-right: 3px; padding: 2px 0 0; text-align: center; line-height: 14.330px; color: #111; }
.upload { width: 760px; height: 108px; border: 1px solid; border-color: #fff #808080 #808080 #fff; padding: 2px; }
.upload-grid { display: grid; grid-template-columns: 418px 335px; grid-template-rows: 67px 4px 25px; column-gap: 2px; row-gap: 2px; }
.cell { border: 1px solid; border-color: #808080 #fff #fff #808080; }
.btn-cell { margin-top: 3px; display: flex; justify-content: center; align-items: center; height: 25px; }
.note-cell { padding: 0 0 0 1px; line-height: 15px; }
.file-cell { padding: 2px 0 0 1px; }
.file-row { display: flex; height: 21px; align-items: center; gap: 3px; }
.file-row-2 { height: 20px; margin-top: -1px; margin-bottom: 1px; }
.file-row-2 .field-file { width: 349px; }
.field-file { width: 350px; height: 19px; border: 2px solid; border-color: #555 #e8e6e0 #e8e6e0 #555; }
.browse { width: 61px; height: 20px; color: #555; text-shadow: 1px 1px 0 #fff; white-space: pre; }
.browse small { font-size: 8px; margin-left: 0; }
.big-btn { height: 21px; }
.btn-upload { width: 69px; }
.btn-reset { width: 66px; }
.save-row { padding: 14px 0 0 309px; }
.save-btn { width: 64px; height: 22px; display: flex; align-items: center; padding-left: 7px; gap: 1px; background: linear-gradient(#fff, #d4e4fa); border: 1px solid #5f8fd8; }
.pen { position: absolute; left: 372px; top: 570px; width: 24px; height: 25px; }

/* scrollbar */
.scrollbar { width: 19px; flex: none; padding: 1px 1px 0 2px; display: flex; flex-direction: column; }
.sb-btn { height: 16px; flex: none; }
.sb-track { height: 232px; flex: none; background-color: #f4f2ee; background-image: repeating-conic-gradient(#d4d0c8 0 25%, #fff 0 50%); background-size: 2px 2px; }
.sb-thumb { flex: 1; }

/* status */
.statusbar { height: 26px; flex: none; border-top: 1px solid #808080; display: flex; align-items: center; padding: 0 2px 0 0; gap: 3px; box-shadow: inset 0 -2px 0 #eeece6; }
.st-cell { height: 18px; border: 1px solid; border-color: #808080 #fff #fff #808080; display: flex; align-items: center; white-space: pre; flex: none; }
.st-grow { width: 654px; flex: 1; border-left-color: transparent; }
.st-small { width: 21px; }
.st-small .ico { width: 19px; height: 17px; margin-left: 1px; }
.st-zone { width: 158px; padding-left: 1px; gap: 3px; }
.ico-zone { width: 18px; height: 18px; }
.st-latin { font-family: "Liberation Mono", monospace; font-size: 10.5px; }
.st-zoom { width: 67px; border: 0; margin-left: 2px; padding-left: 4px; border-left: 1px solid #808080; }
.st-zoom .ico { margin-right: 2px; }
.st-zoom .arrow { margin-left: 9px; border-left-width: 3px; border-right-width: 3px; }
.st-grip { width: 12px; height: 12px; margin-top: 6px; flex: none; background: repeating-linear-gradient(135deg, #d4d0c8 0 2px, #808080 2px 3px, #fff 3px 4px); clip-path: polygon(100% 0, 100% 100%, 0 100%); }

.ti { font-family: "Liberation Sans", sans-serif; font-size: 6px; fill: #333; }
.ti-abc { font-weight: bold; font-size: 6px; }
.ti-sm { font-size: 7px; }
.ti-ab { font-size: 7px; }
.ti-abcg { font-size: 7px; font-weight: bold; fill: #a8a89a; }
.ti-grey { fill: #a8a89a; font-size: 7px; }
.ti-xs { font-size: 5px; }
.ti-t { font-family: "Liberation Serif", serif; font-size: 13px; font-weight: bold; }
.ti-q { font-size: 10px; font-weight: bold; fill: #2a3a90; }
```
